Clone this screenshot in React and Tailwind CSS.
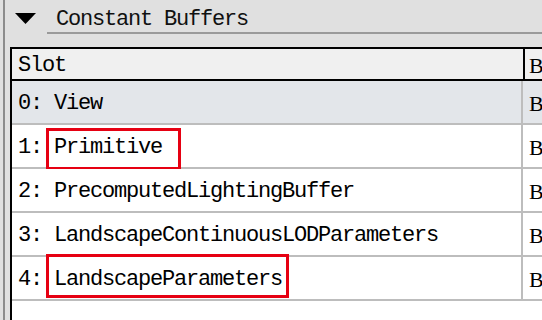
const rows = [
  { slot: '0: View', selected: true },
  { slot: '1: Primitive', box: 'top-[3px] w-[135px] h-[42px]' },
  { slot: '2: PrecomputedLightingBuffer' },
  { slot: '3: LandscapeContinuousLODParameters' },
  { slot: '4: LandscapeParameters', box: 'top-[-3px] w-[243px] h-[44px]' },
];

const mono = "font-['Liberation_Mono',monospace] text-[22px] tracking-[-1.2px]";
const serif = "font-['Liberation_Serif',serif] text-[22px]";

export default function App() {
  return (
    <div className="w-[542px] h-[320px] overflow-hidden bg-[#e0e0e0] pl-[3px]">
      <div className="h-full border-l-2 border-[#8c8c8c] pl-[5px] flex flex-col">
        {/* Section header */}
        <div className="h-[47px] flex items-start shrink-0">
          <svg width="21" height="11" viewBox="0 0 21 11" className="mt-[13px] ml-[5px] shrink-0">
            <polygon points="0,0 21,0 10.5,11" fill="#000" />
          </svg>
          <div className="flex-1 ml-[11px] h-[34px] border-b-2 border-[#9a9a9a] pl-[9px] pt-[8px]">
            <span className={`${mono} leading-[24px] text-[#111] block whitespace-nowrap`}>
              Constant Buffers
            </span>
          </div>
        </div>

        {/* Table */}
        <div className="w-[600px] flex-1 bg-white border-t-2 border-l-2 border-black">
          <div className="h-[32px] flex bg-[#f0f0f0] border-b-2 border-black">
            <div className={`w-[511px] pl-[6px] pt-[3px] flex items-center ${mono} text-black`}>Slot</div>
            <div className={`flex-1 border-l-2 border-black pl-[4px] pt-[3px] flex items-center ${serif} text-black`}>
              Buffer
            </div>
          </div>

          {rows.map((row) => (
            <div
              key={row.slot}
              className={`relative h-[44px] flex border-b-2 border-[#bdbdbd] ${
                row.selected ? 'bg-[#e3e6ea]' : 'bg-white'
              }`}
            >
              <div className={`w-[509px] pl-[6px] pt-[3px] flex items-center whitespace-nowrap ${mono} text-black`}>
                {row.slot}
              </div>
              <div className={`flex-1 border-l-2 border-[#bdbdbd] pl-[6px] pt-[3px] flex items-center ${serif} text-black`}>
                Buffer
              </div>
              {row.box && (
                <div className={`absolute left-[34px] border-[3px] border-[#e60012] ${row.box}`} />
              )}
            </div>
          ))}
        </div>
      </div>
    </div>
  );
}
